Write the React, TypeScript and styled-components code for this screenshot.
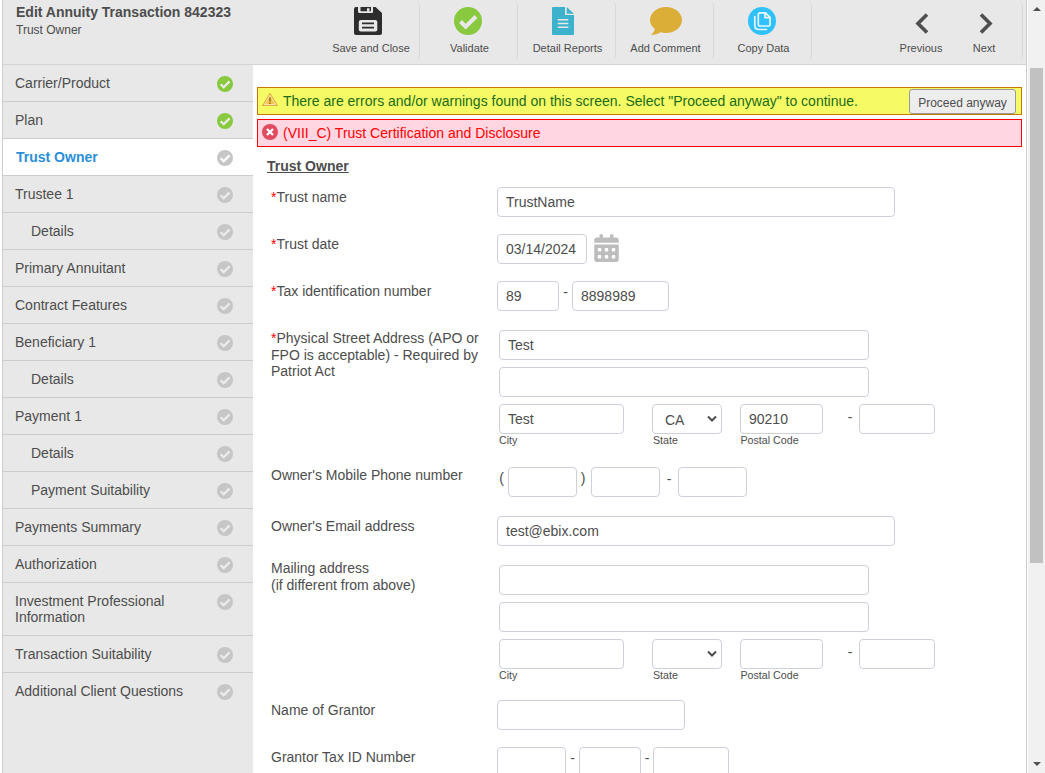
import React from 'react';
import styled, { createGlobalStyle, css } from 'styled-components';
import { FaCalendarDays } from 'react-icons/fa6';

const GlobalStyle = createGlobalStyle`
  * { box-sizing: border-box; }
  html, body { margin: 0; padding: 0; height: 100%; overflow: hidden; background: #fff; }
  body, input, button, select { font-family: "Liberation Sans", Arial, sans-serif; color: #4d4d4d; }
`;

const Window = styled.div`
  display: flex;
  width: 1045px;
  height: 773px;
  padding-left: 2px;
  overflow: hidden;
`;

const Frame = styled.div`
  display: flex;
  flex-direction: column;
  width: 1025px;
  height: 773px;
  border-left: 1px solid #ccc;
  border-right: 1px solid #ccc;
`;

const Header = styled.header`
  display: flex;
  flex: none;
  height: 65px;
  background: #e8e8e8;
  border-bottom: 1px solid #d4d4d4;
`;

const Heading = styled.div`
  width: 318px;
  padding: 4px 0 0 13px;
`;

const Title = styled.h1`
  margin: 0;
  font-size: 14px;
  line-height: 17px;
  font-weight: bold;
  white-space: nowrap;
`;

const Subtitle = styled.div`
  font-size: 12px;
  line-height: 19px;
`;

const Tools = styled.nav`
  display: flex;
  flex: 1;
  padding-top: 2px;
`;

const Tool = styled.a<{ $width?: number; $plain?: boolean; $gap?: number; $nudge?: number }>`
  display: flex;
  flex-direction: column;
  align-items: center;
  width: ${p => p.$width ?? 98}px;
  height: 57px;
  margin-left: ${p => p.$gap ?? 0}px;
  padding: 5px 0 0 ${p => (p.$plain ? 0 : 2)}px;
  border-right: 1px solid ${p => (p.$plain ? 'transparent' : '#d8d8d8')};
  border-radius: 4px;
  font-size: 11px;
  line-height: 14px;
  white-space: nowrap;

  svg { display: block; margin: 0 ${p => -(p.$nudge ?? 0)}px 6px ${p => p.$nudge ?? 0}px; }
`;

const Pager = styled.div`
  display: flex;
  width: 131px;
  height: 57px;
  margin-left: 80px;
  border-right: 1px solid #d8d8d8;
  border-radius: 4px;
`;

const Body = styled.div`
  display: flex;
  flex: 1;
  min-height: 0;
`;

const Sidebar = styled.aside`
  width: 250px;
  flex: none;
  background: #e8e8e8;
`;

const NavItem = styled.div<{ $active?: boolean; $nested?: boolean; $last?: boolean }>`
  display: flex;
  justify-content: space-between;
  padding: 10px 20px 10px ${p => (p.$nested ? 28 : 12)}px;
  border-bottom: 1px solid ${p => (p.$last ? 'transparent' : '#ccc')};
  font-size: 14px;
  line-height: 16px;
  ${p => p.$active && css`
    padding-left: 13px;
    background: #fff;
    color: #2a8fd8;
    font-weight: bold;
  `}

  span { max-width: 180px; }
  svg { flex: none; margin: 1px 0 -1px; }
`;

const Main = styled.main`
  flex: 1;
  padding: 22px 4px 0;
  overflow: hidden;
`;

const Alert = styled.div<{ $kind: 'warning' | 'error' }>`
  display: flex;
  height: 28px;
  margin-bottom: 4px;
  padding: 0 5px 0 4px;
  font-size: 14px;
  line-height: 26px;
  ${p => p.$kind === 'warning'
    ? css`background: #f6fb65; border: 1px solid #c87800; color: #1a6b1a;`
    : css`background: #ffd6e1; border: 1px solid #f00; color: #f00;`}

  > svg { flex: none; margin: 4px 5px 0 0; }
`;

const ProceedButton = styled.button`
  height: 25px;
  width: 107px;
  margin: 1px 0 0 auto;
  padding: 2px 0 0;
  border: 1px solid #999;
  border-radius: 3px;
  background: #ededed;
  font-size: 12px;
`;

const SectionTitle = styled.h2`
  margin: 11px 0 13px 10px;
  font-size: 14px;
  line-height: 16px;
  text-decoration: underline;
`;

const FormRow = styled.div<{ $height: number }>`
  display: grid;
  grid-template-columns: 226px 1fr;
  height: ${p => p.$height}px;
  margin-left: 14px;
`;

const Label = styled.label`
  padding: 2px 10px 0 0;
  font-size: 14px;
  line-height: 16.6px;
`;

const Required = styled.span`
  color: #f00;
`;

const Fields = styled.div<{ $top?: number }>`
  display: flex;
  align-items: flex-start;
  height: 30px;
  margin-top: ${p => p.$top ?? 0}px;
`;

const fieldBox = css`
  height: 30px;
  border: 1px solid #ced0da;
  border-radius: 4px;
  background: #fff;
  font-size: 14px;
`;

const Input = styled.input<{ $width: number }>`
  ${fieldBox}
  flex: none;
  width: ${p => p.$width}px;
  padding: 0 8px;
  outline: none;
`;

const Select = styled.div`
  ${fieldBox}
  display: flex;
  align-items: center;
  justify-content: space-between;
  width: 70px;
  padding: 0 4px 0 12px;

  span { padding-top: 2px; }
`;

const Mark = styled.span<{ $width: number; $drop?: number; $end?: number }>`
  width: ${p => p.$width}px;
  padding-top: ${p => p.$drop ?? 3}px;
  padding-right: ${p => p.$end ?? 0}px;
  font-size: 14px;
  line-height: 16px;
  text-align: center;
`;

const CalendarButton = styled.span`
  margin-left: 6.5px;
  color: #bdbdbd;
  svg { display: block; width: 25px; height: 28px; }
`;

const AddressBlock = styled.div<{ $top: number }>`
  display: flex;
  flex-direction: column;
  gap: 7px;
  padding: ${p => p.$top}px 0 0 2px;
`;

const CityLine = styled.div`
  display: grid;
  grid-template-columns: 153px 88px 83px 36px 76px;
`;

const Captioned = styled.div<{ $indent?: number }>`
  font-size: 10.67px;
  line-height: 13px;
  input, > div { display: flex; }
  > span { padding-left: ${p => p.$indent ?? 0}px; }
`;

const Scrollbar = styled.div`
  display: flex;
  flex-direction: column;
  align-items: center;
  justify-content: space-between;
  width: 17px;
  height: 773px;
  margin-left: 1px;
  padding: 7px 0;
  background: #f1f1f1;
`;

const Thumb = styled.div`
  width: 13px;
  height: 495px;
  margin: 57px 0 auto;
  background: #c1c1c1;
`;

const CheckBadge = ({ size, color, mark = '#e8e8e8' }: { size: number; color: string; mark?: string }) => (
  <svg width={size} height={size} viewBox="0 0 28 28">
    <circle cx="14" cy="14" r="14" fill={color} />
    <path d="M6.5 14.5l5.2 5.2L22 9.5" fill="none" stroke={mark} strokeWidth="4" />
  </svg>
);

const SaveIcon = () => (
  <svg width="28" height="28" viewBox="0 0 28 28">
    <path d="M2 0h2v4.500q0 1.500 1.500 1.500h12Q19 6 19 4.500V0h2.500L28 6v20q0 2-2 2H2q-2 0-2-2V2q0-2 2-2z" fill="#2d2d2d" />
    <path d="M6.500 0h10.500v5H6.500z" fill="#2d2d2d" />
    <path d="M4 0h1.500v5.500H19V0h-1.500v4H5.500V0z" fill="#e8e8e8" opacity=".75" />
    <path d="M13 1.300h2.500v3.200H13z" fill="#e8e8e8" />
    <rect x="4.800" y="13" width="18.500" height="11.500" rx="2" fill="#e8e8e8" />
    <path d="M8 16.300h12M8 20.700h12" stroke="#2d2d2d" strokeWidth="1.700" />
  </svg>
);

const ReportIcon = () => (
  <svg width="22" height="28" viewBox="0 0 22 28">
    <path d="M1 0h12v8h9v19q0 1-1 1H1q-1 0-1-1V1q0-1 1-1z" fill="#3db2cc" />
    <path d="M14.700 0L22 6.700h-7.300z" fill="#3db2cc" />
    <path d="M5.700 12.700h10.600M5.700 16.500h10.600M5.700 20.300h10.600" stroke="#e8e8e8" strokeWidth="1.400" />
  </svg>
);

const CommentIcon = () => (
  <svg width="32" height="28" viewBox="0 0 32 28">
    <path d="M16 0c8.800 0 16 5.800 16 13s-7.200 13-16 13c-2 0-3.900-.3-5.600-.8C8 27 4.500 28 .8 28c2-1.600 3.700-3.700 4-6C1.800 19.700 0 16.500 0 13 0 5.800 7.200 0 16 0z" fill="#dbae38" />
  </svg>
);

const CopyIcon = () => (
  <svg width="28" height="28" viewBox="0 0 28 28">
    <circle cx="14" cy="14" r="14" fill="#2fc1fb" />
    <g fill="none" stroke="#e8f6fc" strokeWidth="1.700" strokeLinejoin="round" strokeLinecap="round">
      <path d="M12 5.800h5.500l4.500 4.500v7q0 1.700-1.700 1.700H12q-1.700 0-1.700-1.700v-9.800q0-1.700 1.700-1.700z" />
      <path d="M17 6v4.700h4.800" />
      <path d="M6.800 9.500v9q0 4 4 4h7.700" />
    </g>
  </svg>
);

const Chevron = ({ right }: { right?: boolean }) => (
  <svg width="14" height="28" viewBox="0 0 14 28">
    <path d={right ? 'M2 7.500l9 9-9 9' : 'M12 7.500l-9 9 9 9'} fill="none" stroke="#4f4f4f" strokeWidth="3.600" />
  </svg>
);

const WarningIcon = () => (
  <svg width="16" height="16" viewBox="0 0 16 16">
    <path d="M8 1.500L15.300 13.500H.7z" fill="#f3c64e" stroke="#d9a23a" strokeLinejoin="round" />
    <path d="M8 3.300L13.700 12.700H2.300z" fill="none" stroke="#fbe9b0" strokeWidth="1" />
    <path d="M8 5.500v4M8 10.500v1.500" stroke="#8c6418" strokeWidth="1.400" />
  </svg>
);

const ErrorIcon = () => (
  <svg width="16" height="16" viewBox="0 0 16 16">
    <circle cx="8" cy="8" r="8" fill="#e04b5f" />
    <path d="M5 5l6 6M11 5l-6 6" stroke="#fff" strokeWidth="2.300" />
  </svg>
);

const SelectArrow = () => (
  <svg width="10" height="8" viewBox="0 0 10 8">
    <path d="M1 1.500l4 4 4-4" fill="none" stroke="#4d4d4d" strokeWidth="2" />
  </svg>
);

const Arrow = ({ down }: { down?: boolean }) => (
  <svg width="8" height="4" viewBox="0 0 8 4">
    <path d={down ? 'M0 0h8L4 4z' : 'M0 4h8L4 0z'} fill="#505050" />
  </svg>
);

const navigation = [
  { text: 'Carrier/Product', done: true },
  { text: 'Plan', done: true },
  { text: 'Trust Owner', active: true },
  { text: 'Trustee 1' },
  { text: 'Details', nested: true },
  { text: 'Primary Annuitant' },
  { text: 'Contract Features' },
  { text: 'Beneficiary 1' },
  { text: 'Details', nested: true },
  { text: 'Payment 1' },
  { text: 'Details', nested: true },
  { text: 'Payment Suitability', nested: true },
  { text: 'Payments Summary' },
  { text: 'Authorization' },
  { text: 'Investment Professional Information' },
  { text: 'Transaction Suitability' },
  { text: 'Additional Client Questions' },
];

interface AddressProps { top: number; street?: string; city?: string; state?: string; zip?: string }

const Address = ({ top, street = '', city = '', state = '', zip = '' }: AddressProps) => (
  <AddressBlock $top={top}>
    <Input $width={370} defaultValue={street} />
    <Input $width={370} />
    <CityLine>
      <Captioned><Input $width={125} defaultValue={city} /><span>City</span></Captioned>
      <Captioned $indent={1}><Select><span>{state}</span><SelectArrow /></Select><span>State</span></Captioned>
      <Captioned $indent={0.5}><Input $width={83} defaultValue={zip} /><span>Postal Code</span></Captioned>
      <Mark $width={54} $drop={5}>-</Mark>
      <Input $width={76} />
    </CityLine>
  </AddressBlock>
);

export default function App() {
  return (
    <Window>
      <GlobalStyle />
      <Frame>
        <Header>
          <Heading>
            <Title>Edit Annuity Transaction 842323</Title>
            <Subtitle>Trust Owner</Subtitle>
          </Heading>
          <Tools>
            <Tool $width={99} $nudge={-3}><SaveIcon />Save and Close</Tool>
            <Tool $nudge={-2}><CheckBadge size={28} color="#88c940" />Validate</Tool>
            <Tool $nudge={-5}><ReportIcon />Detail Reports</Tool>
            <Tool><CommentIcon />Add Comment</Tool>
            <Tool $nudge={-2}><CopyIcon />Copy Data</Tool>
            <Pager>
              <Tool $width={59} $nudge={1} $plain><Chevron />Previous</Tool>
              <Tool $width={59} $nudge={2} $gap={4} $plain><Chevron right />Next</Tool>
            </Pager>
          </Tools>
        </Header>
        <Body>
          <Sidebar>
            {navigation.map((item, i) => (
              <NavItem key={i} $active={item.active} $nested={item.nested} $last={i === navigation.length - 1}>
                <span>{item.text}</span>
                <CheckBadge size={16} color={item.done ? '#88c940' : '#c6c6c6'} mark={item.active ? '#fff' : '#ececec'} />
              </NavItem>
            ))}
          </Sidebar>
          <Main>
            <Alert $kind="warning">
              <WarningIcon />
              There are errors and/or warnings found on this screen. Select "Proceed anyway" to continue.
              <ProceedButton>Proceed anyway</ProceedButton>
            </Alert>
            <Alert $kind="error"><ErrorIcon />(VIII_C) Trust Certification and Disclosure</Alert>
            <SectionTitle>Trust Owner</SectionTitle>

            <FormRow $height={47}>
              <Label><Required>*</Required>Trust name</Label>
              <Fields><Input $width={398} defaultValue="TrustName" /></Fields>
            </FormRow>
            <FormRow $height={47}>
              <Label><Required>*</Required>Trust date</Label>
              <Fields>
                <Input $width={90} defaultValue="03/14/2024" />
                <CalendarButton><FaCalendarDays /></CalendarButton>
              </Fields>
            </FormRow>
            <FormRow $height={47}>
              <Label><Required>*</Required>Tax identification number</Label>
              <Fields>
                <Input $width={62} defaultValue="89" />
                <Mark $width={13}>-</Mark>
                <Input $width={97} defaultValue="8898989" />
              </Fields>
            </FormRow>
            <FormRow $height={137}>
              <Label><Required>*</Required>Physical Street Address (APO or FPO is acceptable) - Required by Patriot Act</Label>
              <Address top={2} street="Test" city="Test" state="CA" zip="90210" />
            </FormRow>
            <FormRow $height={51}>
              <Label>Owner's Mobile Phone number</Label>
              <Fields $top={2}>
                <Mark $width={11} $end={2}>(</Mark>
                <Input $width={69} />
                <Mark $width={14} $end={2}>)</Mark>
                <Input $width={69} />
                <Mark $width={18} $drop={4}>-</Mark>
                <Input $width={69} />
              </Fields>
            </FormRow>
            <FormRow $height={42}>
              <Label>Owner's Email address</Label>
              <Fields><Input $width={398} defaultValue="test@ebix.com" /></Fields>
            </FormRow>
            <FormRow $height={142}>
              <Label>Mailing address<br />(if different from above)</Label>
              <Address top={7} />
            </FormRow>
            <FormRow $height={47}>
              <Label>Name of Grantor</Label>
              <Fields><Input $width={188} /></Fields>
            </FormRow>
            <FormRow $height={47}>
              <Label>Grantor Tax ID Number</Label>
              <Fields>
                <Input $width={69} />
                <Mark $width={13}>-</Mark>
                <Input $width={62} />
                <Mark $width={12}>-</Mark>
                <Input $width={76} />
              </Fields>
            </FormRow>
          </Main>
        </Body>
      </Frame>
      <Scrollbar>
        <Arrow />
        <Thumb />
        <Arrow down />
      </Scrollbar>
    </Window>
  );
}
